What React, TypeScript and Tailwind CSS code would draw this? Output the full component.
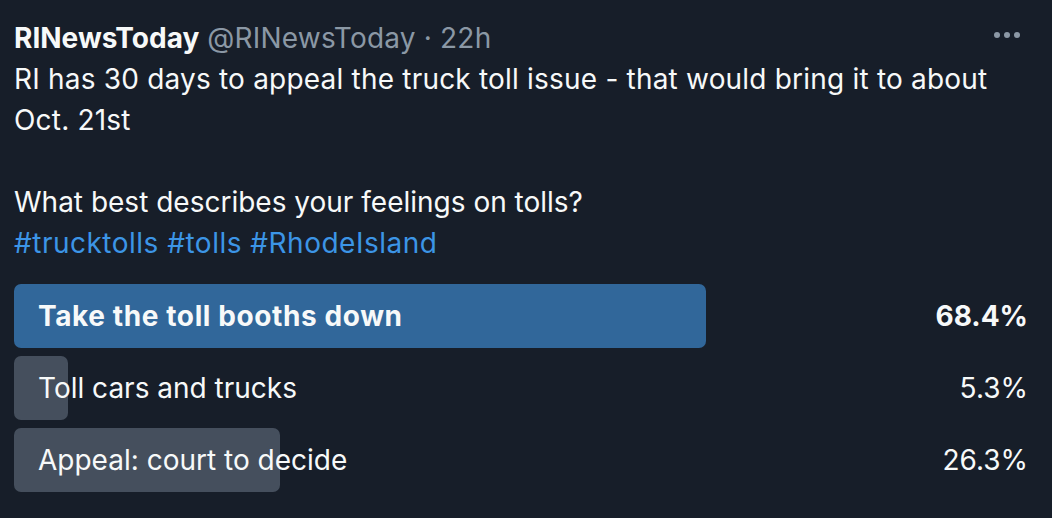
const options = [
  { label: "Take the toll booths down", pct: 68.4, winner: true },
  { label: "Toll cars and trucks", pct: 5.3, winner: false },
  { label: "Appeal: court to decide", pct: 26.3, winner: false },
];

export default function App() {
  return (
    <div
      className="w-[1052px] h-[518px] bg-[#171e29] text-[#f7f9f9] overflow-hidden px-[14px] pt-[17px]"
      style={{ fontFamily: "Inter, 'Noto Sans', sans-serif" }}
    >
      <div className="flex items-start justify-between">
        <div className="text-[28px] leading-[42px] flex gap-[8px] whitespace-nowrap">
          <span className="font-bold">RINewsToday</span>
          <span className="text-[#8b98a5] tracking-[0.2px]">@RINewsToday · 22h</span>
        </div>
        <div className="flex gap-[4px] pt-[15px] pr-[18px]">
          <span className="w-[6px] h-[6px] rounded-full bg-[#8b98a5]" />
          <span className="w-[6px] h-[6px] rounded-full bg-[#8b98a5]" />
          <span className="w-[6px] h-[6px] rounded-full bg-[#8b98a5]" />
        </div>
      </div>
      <div className="text-[28px] leading-[41px]">
        <p className="max-w-[985px] tracking-[0.2px]">
          RI has 30 days to appeal the truck toll issue - that would bring it to about Oct. 21st
        </p>
        <p className="mt-[41px]">What best describes your feelings on tolls?</p>
        <p className="text-[#3c95e6] tracking-[0.5px]">#trucktolls #tolls #RhodeIsland</p>
      </div>
      <div className="mt-[20px] flex flex-col gap-[8px] w-[1012px]">
        {options.map((o) => (
          <div key={o.label} className="relative h-[64px] flex items-center justify-between">
            <div
              className={
                "absolute left-0 top-0 h-full rounded-[7px] " +
                (o.winner ? "bg-[#31679a]" : "bg-[#454f5d]")
              }
              style={{ width: `${o.pct}%` }}
            />
            <span
              className={
                "relative pl-[24px] text-[28px] " + (o.winner ? "font-bold tracking-[0.6px]" : "")
              }
            >
              {o.label}
            </span>
            <span className={"relative -mr-[2px] text-[28px] " + (o.winner ? "font-bold" : "")}>
              {o.pct.toFixed(1)}%
            </span>
          </div>
        ))}
      </div>
    </div>
  );
}
